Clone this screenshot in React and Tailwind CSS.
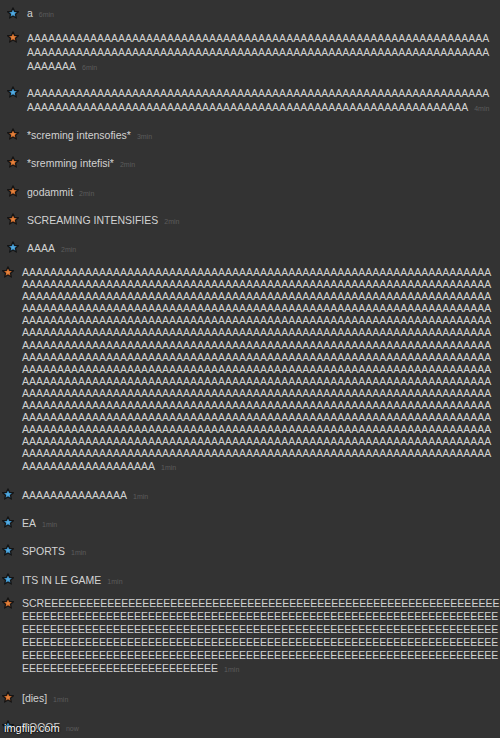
import React from "react";

const A = (n) => "A".repeat(n);
const E = (n) => "E".repeat(n);

function Star({ color }) {
  const id = color === "blue" ? "gb" : "go";
  const inner = color === "blue" ? "#5ab4ea" : "#ee8a40";
  const outer = color === "blue" ? "#1a6296" : "#963f14";
  return (
    <svg width="12" height="12" viewBox="0 0 24 24" className="block">
      <defs>
        <radialGradient id={id} cx="50%" cy="55%" r="55%">
          <stop offset="0%" stopColor={inner} />
          <stop offset="100%" stopColor={outer} />
        </radialGradient>
      </defs>
      <path
        d="M12 1.5l3.1 7.2 7.8.7-5.9 5.1 1.8 7.7L12 18.1l-6.8 4.1 1.8-7.7-5.9-5.1 7.8-.7z"
        fill={`url(#${id})`}
        stroke="#141414"
        strokeWidth="2.4"
        strokeLinejoin="round"
      />
    </svg>
  );
}

function Time({ t }) {
  return <span className="ml-[6px] text-[7px] leading-none text-[#5c5c5c]">{t}</span>;
}

function Msg({ color, lines, time, top, lh, mt }) {
  const rowCls = top ? "flex items-start pl-[7px]" : "flex items-start pl-[2px]";
  return (
    <div className={rowCls + " " + mt}>
      <div className={"w-[12px] shrink-0 flex items-center " + lh}>
        <Star color={color} />
      </div>
      <div className={"ml-[8px] text-[10.5px] text-[#d2d2d2] whitespace-nowrap " + lh}>
        {lines.map((l, i) => (
          <div key={i} className={lh}>
            {l}
            {i === lines.length - 1 && <Time t={time} />}
          </div>
        ))}
      </div>
    </div>
  );
}

export default function App() {
  const big = [];
  for (let i = 0; i < 16; i++) big.push(A(67));
  big.push(A(19));
  const scree = ["SCR" + E(65), E(68), E(68), E(68), E(68), E(28)];
  return (
    <div
      className="relative w-[500px] h-[738px] overflow-hidden bg-[#333333] pt-[6px]"
      style={{ fontFamily: '"Liberation Sans", Arial, sans-serif' }}
    >
      <div className="flex flex-col">
        <Msg top color="blue" lines={["a"]} time="6min" lh="h-[14px] leading-[14px]" mt="mt-0" />
        <Msg top color="orange" lines={[A(66), A(66), A(7)]} time="6min" lh="leading-[14px]" mt="mt-[11px]" />
        <Msg top color="blue" lines={[A(66), A(63)]} time="4min" lh="leading-[14px]" mt="mt-[13px]" />
        <Msg top color="orange" lines={["*screming intensofies*"]} time="3min" lh="leading-[14px]" mt="mt-[14px]" />
        <Msg top color="orange" lines={["*sremming intefisi*"]} time="2min" lh="leading-[14px]" mt="mt-[14px]" />
        <Msg top color="orange" lines={["godammit"]} time="2min" lh="leading-[14px]" mt="mt-[14.5px]" />
        <Msg top color="orange" lines={["SCREAMING INTENSIFIES"]} time="2min" lh="leading-[14px]" mt="mt-[14px]" />
        <Msg top color="blue" lines={["AAAA"]} time="2min" lh="leading-[14px]" mt="mt-[14.5px]" />
        <Msg color="orange" lines={big} time="1min" lh="leading-[12.1px]" mt="mt-[11px]" />
        <Msg color="blue" lines={[A(15)]} time="1min" lh="leading-[14px]" mt="mt-[16px]" />
        <Msg color="blue" lines={["EA"]} time="1min" lh="leading-[14px]" mt="mt-[14.3px]" />
        <Msg color="blue" lines={["SPORTS"]} time="1min" lh="leading-[14px]" mt="mt-[14px]" />
        <Msg color="blue" lines={["ITS IN LE GAME"]} time="1min" lh="leading-[14px]" mt="mt-[15px]" />
        <Msg color="orange" lines={scree} time="1min" lh="leading-[13px]" mt="mt-[10px]" />
        <Msg color="orange" lines={["[dies]"]} time="1min" lh="leading-[14px]" mt="mt-[16px]" />
        <Msg color="blue" lines={["POOOF"]} time="now" lh="leading-[14px]" mt="mt-[15px]" />
      </div>
      <div className="absolute left-[4px] top-[721px] text-[11px] leading-[14px] text-white [text-shadow:0_0_2px_#000,0_0_1px_#000,0_0_1px_#000]">
        imgflip.com
      </div>
    </div>
  );
}
